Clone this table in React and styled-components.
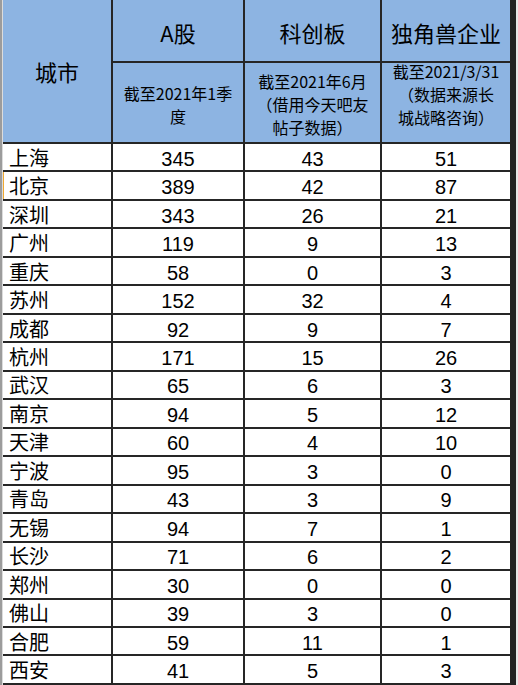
import React from 'react';
import styled, { createGlobalStyle } from 'styled-components';

const Global = createGlobalStyle`
  html, body { margin: 0; padding: 0; background: #ffffff; }
  body { font-family: "Noto Sans CJK SC", sans-serif; color: #000; }
`;

const Page = styled.div`
  display: flex;
  width: 518px;
  height: 685px;
  overflow: hidden;
  background: #e6e6e6;
`;

const Gutter = styled.div`
  width: 2px;
  flex: none;
  background: #9c9c9c;
  border-right: 1px solid #dcdcdc;
`;

const Sheet = styled.div`
  display: grid;
  grid-template-columns: 110px 132px 137px 128px;
  grid-template-rows: 63px 81px;
  grid-auto-rows: 28.47px;
  border-right: 6px solid #222;
  background: #fff;
  flex: none;
`;

const Cell = styled.div`
  box-sizing: border-box;
  border-bottom: 2px solid #262626;
  border-right: ${p => (p.$last ? 'none' : '2px solid #262626')};
  display: flex;
  align-items: center;
  justify-content: ${p => (p.$left ? 'flex-start' : 'center')};
  background: ${p => (p.$head ? '#8db4e2' : '#ffffff')};
  box-shadow: ${p => (p.$marked ? 'inset 1px 0 0 #f0a830' : 'none')};
  white-space: nowrap;
`;

const CityHead = styled(Cell)`
  grid-row: span 2;
  font-size: 22px;
  line-height: 26px;
`;

const Title = styled(Cell)`
  font-size: 22px;
  line-height: 26px;
  padding-top: 2px;
`;

const Note = styled(Cell)`
  flex-direction: column;
  justify-content: ${p => (p.$top ? 'flex-start' : 'center')};
  padding-top: ${p => (p.$top ? '0' : '4px')};
  font-size: 16px;
  line-height: 23px;
`;

const NoteBody = styled.div`
  margin-top: ${p => (p.$top ? '-3px' : '0')};
`;

const NoteLine = styled.span`
  display: block;
  text-align: center;
`;

const City = styled(Cell)`
  font-size: 20px;
  line-height: 24px;
  padding-left: 6px;
  padding-top: 1px;
`;

const Num = styled(Cell)`
  font-family: "Liberation Sans", Arial, sans-serif;
  font-size: 20px;
  line-height: 22px;
  padding-top: 3px;
`;

const rows = [
  ['上海', 345, 43, 51],
  ['北京', 389, 42, 87],
  ['深圳', 343, 26, 21],
  ['广州', 119, 9, 13],
  ['重庆', 58, 0, 3],
  ['苏州', 152, 32, 4],
  ['成都', 92, 9, 7],
  ['杭州', 171, 15, 26],
  ['武汉', 65, 6, 3],
  ['南京', 94, 5, 12],
  ['天津', 60, 4, 10],
  ['宁波', 95, 3, 0],
  ['青岛', 43, 3, 9],
  ['无锡', 94, 7, 1],
  ['长沙', 71, 6, 2],
  ['郑州', 30, 0, 0],
  ['佛山', 39, 3, 0],
  ['合肥', 59, 11, 1],
  ['西安', 41, 5, 3],
];

const notes = [
  { lines: ['截至2021年1季', '度'] },
  { lines: ['截至2021年6月', '（借用今天吧友', '帖子数据）'] },
  { lines: ['截至2021/3/31', '（数据来源长', '城战略咨询）'], top: true },
];

export default function App() {
  return (
    <Page>
      <Global />
      <Gutter />
      <Sheet>
        <CityHead $head>城市</CityHead>
        <Title $head>A股</Title>
        <Title $head>科创板</Title>
        <Title $head $last>独角兽企业</Title>
        {notes.map((n, i) => (
          <Note key={i} $head $top={n.top} $last={i === 2}>
            <NoteBody $top={n.top}>
              {n.lines.map(l => (
                <NoteLine key={l}>{l}</NoteLine>
              ))}
            </NoteBody>
          </Note>
        ))}
        {rows.map(([city, a, b, c]) => (
          <React.Fragment key={city}>
            <City $left $marked={city === '北京'}>{city}</City>
            <Num>{a}</Num>
            <Num>{b}</Num>
            <Num $last>{c}</Num>
          </React.Fragment>
        ))}
      </Sheet>
    </Page>
  );
}
